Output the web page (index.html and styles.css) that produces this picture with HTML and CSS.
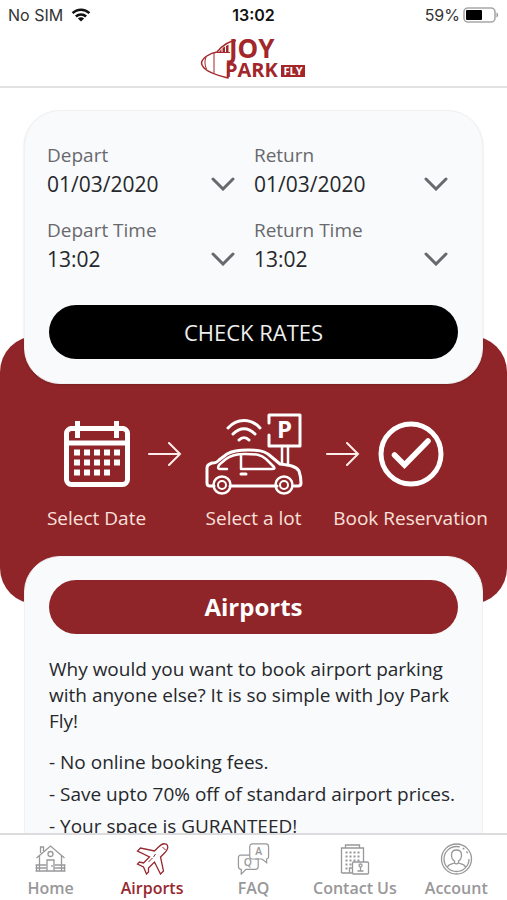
FILE: index.html
```html
<!DOCTYPE html>
<html lang="en">
<head>
<meta charset="utf-8">
<meta name="viewport" content="width=device-width, initial-scale=1">
<title>Joy Park Fly</title>
<link rel="stylesheet" href="styles.css">
</head>
<body>
<div class="status">
  <div class="status-left">
    <span>No SIM</span>
    <svg width="20" height="14" viewBox="0 0 20 14" aria-hidden="true">
      <g fill="none" stroke="#111" stroke-width="2.6">
        <path d="M1.6 5.2C6.2.6 13.800.6 18.400 5.200"/>
        <path d="M4.900 8.500C7.700 5.800 12.300 5.800 15.100 8.500"/>
      </g>
      <path d="M10 13.500L6.900 10.400C8.600 8.900 11.400 8.900 13.100 10.400Z" fill="#111"/>
    </svg>
  </div>
  <span class="status-time">13:02</span>
  <div class="status-right">
    <span>59%</span>
    <svg width="36" height="16" viewBox="0 0 36 16" aria-hidden="true">
      <rect x="1" y="1" width="31" height="14" rx="4" fill="#fff" stroke="#a8a8a8" stroke-width="1.600"/>
      <rect x="3" y="3" width="16" height="10" rx="1" fill="#000"/>
      <path d="M33.500 5.500C35.700 6 35.700 10 33.500 10.500Z" fill="#999"/>
    </svg>
  </div>
</div>

<header class="header">
  <svg class="logo" width="106" height="42" viewBox="0 0 106 42" role="img" aria-label="Joy Park Fly">
    <g fill="none" stroke="#a3262b" stroke-width="1.500" stroke-linejoin="round">
      <path d="M35 2.500C27 3 21 8 16 14C9 15 1 20 .5 25C1 31 10 36 27 40V27"/>
      <path d="M5 19C3.500 23 3.500 27 5.500 31M13 15V35" stroke-width="1"/>
      <path d="M16 14.500H29" stroke-width="1"/>
    </g>
    <path d="M18 14L20.500 11V15ZM21.500 10L24 8.500V15H21.500ZM25 8L27.500 6.500V15H25Z" fill="#a3262b"/>
    <text class="logo-joy" x="28" y="20">JOY</text>
    <text class="logo-park" x="24" y="39">PARK</text>
    <rect x="80" y="27" width="24" height="12" fill="#a3262b"/>
    <text class="logo-fly" x="92" y="37" text-anchor="middle">FLY</text>
  </svg>
</header>

<main class="content">
  <form class="card search">
    <div class="fields">
      <div class="field">
        <label for="depart-date">Depart</label>
        <div class="picker">
          <select id="depart-date"><option>01/03/2020</option></select>
          <svg class="chevron" viewBox="0 0 24 14" aria-hidden="true"><path d="M2 2L12 12L22 2"/></svg>
        </div>
      </div>
      <div class="field">
        <label for="return-date">Return</label>
        <div class="picker">
          <select id="return-date"><option>01/03/2020</option></select>
          <svg class="chevron" viewBox="0 0 24 14" aria-hidden="true"><path d="M2 2L12 12L22 2"/></svg>
        </div>
      </div>
      <div class="field">
        <label for="depart-time">Depart Time</label>
        <div class="picker">
          <select id="depart-time"><option>13:02</option></select>
          <svg class="chevron" viewBox="0 0 24 14" aria-hidden="true"><path d="M2 2L12 12L22 2"/></svg>
        </div>
      </div>
      <div class="field">
        <label for="return-time">Return Time</label>
        <div class="picker">
          <select id="return-time"><option>13:02</option></select>
          <svg class="chevron" viewBox="0 0 24 14" aria-hidden="true"><path d="M2 2L12 12L22 2"/></svg>
        </div>
      </div>
    </div>
    <button type="button" class="rates">CHECK RATES</button>
  </form>

  <section class="band">
    <div class="step">
      <svg width="66" height="66" viewBox="0 0 66 66" aria-hidden="true">
        <rect x="2.500" y="7.500" width="61" height="56" rx="5" fill="none" stroke="#fff" stroke-width="5"/>
        <path d="M2 22H64" stroke="#fff" stroke-width="5"/>
        <path d="M13.500 0V17M52.500 0V17M6 7.500H60" stroke="#fff" stroke-width="5"/>
        <path d="M10 31.500H58M10 41.500H58M10 51.500H48" stroke="#fff" stroke-width="6" stroke-dasharray="6 4"/>
      </svg>
      <span>Select Date</span>
    </div>
    <svg class="arrow" viewBox="0 0 34 24" aria-hidden="true"><path d="M1 12H32M21 1L32 12L21 23"/></svg>
    <div class="step step-wide">
      <svg width="98" height="82" viewBox="0 0 98 82" aria-hidden="true">
        <g fill="none" stroke="#fff" stroke-width="3" stroke-linecap="round" stroke-linejoin="round">
          <path d="M23 15C32 5 46 5 55 15M28 21C35 14 43 14 50 21M34 27C37 24 41 24 44 27"/>
          <path d="M64 10V2H95V33H64V22"/>
          <path d="M77 33V50M83 33V52" stroke-width="2.500"/>
          <path d="M9 73H5C3 73 2 72 2 70V55C2 52 4 51 7 50C10 50 12 50 14 47L22 41C27 38 32 37 43 37C54 37 58 38 63 41L75 51C84 52 91 53 94 58C95 61 96 65 96 70C96 72 95 73 93 73H89M25 73H72"/>
          <path d="M22 56H15C12 56 13 53 15 51L21 46C26 42 31 41 40 41C53 41 56 42 61 46L69 54C70 56 69 56 67 56H36M36 42V56" stroke-width="2.500"/>
          <path d="M36 61H41"/>
          <circle cx="17" cy="72" r="8.500" stroke-width="2.500"/><circle cx="79" cy="72" r="8.500" stroke-width="2.500"/>
          <circle cx="17" cy="72" r="4" stroke-width="2"/><circle cx="79" cy="72" r="4" stroke-width="2"/>
        </g>
        <text class="sign" x="79.500" y="25" text-anchor="middle">P</text>
      </svg>
      <span>Select a lot</span>
    </div>
    <svg class="arrow" viewBox="0 0 34 24" aria-hidden="true"><path d="M1 12H32M21 1L32 12L21 23"/></svg>
    <div class="step">
      <svg width="66" height="66" viewBox="0 0 66 66" aria-hidden="true">
        <g fill="none" stroke="#fff" stroke-width="5" stroke-linecap="round">
          <circle cx="33" cy="33" r="30"/>
          <path d="M16.500 34L26.500 44L50 20" stroke-width="5.500"/>
        </g>
      </svg>
      <span>Book Reservation</span>
    </div>
  </section>

  <section class="card airports">
    <h1>Airports</h1>
    <p>Why would you want to book airport parking with anyone else? It is so simple with Joy Park Fly!</p>
    <ul>
      <li>- No online booking fees.</li>
      <li>- Save upto 70% off of standard airport prices.</li>
      <li>- Your space is GURANTEED!</li>
    </ul>
  </section>
</main>

<nav class="tabs">
  <a href="#home">
    <svg viewBox="0 0 32 32" aria-hidden="true">
      <path d="M2 15L16 3L30 15M5 13V28M27 13V28M1 28H31M6 10V4H9V8M5 22H12M20 22H27M1 22H5M27 22H31M1 25H12M20 25H31M2 22V28M30 22V28"/>
      <circle cx="16" cy="11" r="2.500"/><path d="M12.500 28V17H19.500V28M17.500 22V24"/>
    </svg>
    <span>Home</span>
  </a>
  <a href="#airports" class="active" aria-current="page">
    <svg viewBox="0 0 32 32" aria-hidden="true">
      <path d="M29 1C26 0 24 2 21 5L18 8L4 5L1 8L13 14L7 20L3 19L1 21L7 24L10 31L12 29L12 25L18 19L24 31L27 28L24 14L27 11C30 8 32 5 31 3C31 2 30 1 29 1Z"/>
      <path d="M26 4L29 7M19 11L17 14M16 15L12 19" stroke-width="1"/>
    </svg>
    <span>Airports</span>
  </a>
  <a href="#faq">
    <svg viewBox="0 0 34 34" aria-hidden="true">
      <path d="M13 13V4C13 2 14 1 16 1H30C32 1 33 2 33 4V15C33 17 32 17 31 17V21L26 17H19"/>
      <path d="M13 13H3C2 13 1 14 1 15V25C1 27 2 28 4 28V33L9 28H19C21 28 22 27 22 25V17H15C13 17 13 15 13 13"/>
      <text class="bubble" x="22.500" y="13" text-anchor="middle">A</text>
      <text class="bubble" x="11" y="24" text-anchor="middle">Q</text>
    </svg>
    <span>FAQ</span>
  </a>
  <a href="#contact">
    <svg viewBox="0 0 32 32" aria-hidden="true">
      <path d="M3 30V5H25V19M7 5V2H21V5M3 30H14M11 30V25H14"/>
      <path d="M7 9.500H22M7 13.500H22M7 17.500H22M7 21.500H13M7 25.500H10" stroke-width="2" stroke-dasharray="2 2"/>
      <rect x="14" y="19" width="16" height="12" rx="1"/>
      <circle cx="22" cy="22.500" r="1.500"/><path d="M19 28H25M22 24V28"/>
    </svg>
    <span>Contact Us</span>
  </a>
  <a href="#account">
    <svg viewBox="0 0 32 32" aria-hidden="true">
      <circle cx="16" cy="16" r="15"/><circle cx="16" cy="16" r="12.500" stroke-dasharray="62 3 2 3 2 7"/>
      <path d="M16 7C12.500 7 11 9 11 12C11 15 12 17 14 18V20C11 21 8 21 7 24M16 7C19.500 7 21 9 21 12C21 15 20 17 18 18V20C21 21 24 21 25 24M14 20C15 21 17 21 18 20"/>
    </svg>
    <span>Account</span>
  </a>
</nav>
</body>
</html>
```

FILE: styles.css
```css
* {
  box-sizing: border-box;
}

body {
  margin: 0;
  height: 100vh;
  display: flex;
  flex-direction: column;
  background: #fff;
  color: #26282b;
  font-family: "Open Sans", "Noto Sans", sans-serif;
}

.status {
  display: grid;
  grid-template-columns: 1fr auto 1fr;
  align-items: center;
  height: 30px;
  padding: 0 8px;
  color: #333;
  font: 16px/20px Inter, "Liberation Sans", sans-serif;
}

.status-left,
.status-right {
  display: flex;
  align-items: center;
  gap: 8px;
}

.status-right {
  justify-content: flex-end;
  gap: 3px;
}

.status-time {
  color: #111;
  font-weight: 600;
}

.header {
  display: flex;
  justify-content: center;
  padding: 8px 0 6px;
  border-bottom: 2px solid #e2e2e4;
}

.logo {
  overflow: visible;
}

.logo text {
  fill: #a3262b;
  font-weight: 700;
}

.logo .logo-joy {
  font-size: 26px;
}

.logo .logo-park {
  font-size: 20px;
}

.logo .logo-fly {
  fill: #fff;
  font-size: 11px;
}

.content {
  flex: 1;
  min-height: 0;
  padding-top: 22px;
  overflow: hidden auto;
  scrollbar-width: none;
}

.card {
  position: relative;
  margin: 0 24px;
  padding: 24px;
  border: 1px solid #eff1f3;
  border-radius: 36px;
  background: #f9fafc;
}

.search {
  padding-top: 32px;
  box-shadow: 0 1px 2px rgba(0, 0, 0, 0.15);
}

.fields {
  display: grid;
  grid-template-columns: 31fr 32fr;
  gap: 17px 19px;
  padding: 0 10px 0 0;
  margin-left: -2px;
}

.field label {
  display: block;
  color: #68696c;
  font-size: 19px;
  line-height: 24px;
}

.picker {
  display: grid;
  align-items: center;
}

.picker > * {
  grid-area: 1 / 1;
}

.picker select {
  width: 100%;
  height: 34px;
  padding: 0;
  border: 0;
  background: transparent;
  color: #26282b;
  font: 21px/34px "Open Sans", "Noto Sans", sans-serif;
  appearance: none;
}

.chevron {
  justify-self: end;
  width: 24px;
  height: 14px;
  fill: none;
  stroke: #68696c;
  stroke-width: 3;
  stroke-linecap: round;
  pointer-events: none;
}

.rates,
.airports h1 {
  display: block;
  width: 100%;
  margin: 0;
  padding: 0;
  border: 0;
  border-radius: 27px;
  color: #fff;
  line-height: 54px;
  text-align: center;
}

.rates {
  margin-top: 29px;
  background: #000;
  color: #eee;
  font-family: inherit;
  font-size: 22px;
}

.band {
  display: flex;
  justify-content: center;
  gap: 18px;
  margin-top: -48px;
  padding: 77px 0 72px;
  border-radius: 36px;
  background: #8f2528;
}

.step {
  display: flex;
  flex-direction: column;
  align-items: center;
  justify-content: flex-end;
  gap: 17px;
  width: 66px;
  color: #fbe0dc;
  font-size: 19px;
  line-height: 28px;
  white-space: nowrap;
}

.step > svg {
  flex: none;
}

.step-wide {
  width: 108px;
  gap: 9px;
}

.sign {
  fill: #fff;
  font-size: 24px;
  font-weight: 700;
}

.arrow {
  width: 34px;
  height: 24px;
  margin-top: 29px;
  fill: none;
  stroke: #fbecea;
  stroke-width: 2;
  stroke-linecap: round;
}

.airports {
  margin-top: -48px;
  padding-top: 23px;
}

.airports h1 {
  background: #8f2528;
  font-size: 24px;
}

.airports p {
  margin: 22px 0 12px;
  font-size: 19px;
  line-height: 26px;
}

.airports ul {
  margin: 0;
  padding: 0;
  font-size: 19px;
  line-height: 32px;
  list-style: none;
}

.tabs {
  display: grid;
  grid-template-columns: repeat(5, 1fr);
  height: 67px;
  padding-top: 8px;
  border-top: 2px solid #dcdcde;
  background: #fff;
}

.tabs a {
  display: flex;
  flex-direction: column;
  align-items: center;
  gap: 2px;
  color: #98989a;
  font-size: 16px;
  font-weight: 600;
  line-height: 22px;
  text-decoration: none;
  white-space: nowrap;
}

.tabs .active {
  color: #96282f;
}

.tabs svg {
  width: 33px;
  height: 32px;
  fill: none;
  stroke: currentColor;
  stroke-width: 1.3;
}

.tabs .bubble {
  fill: currentColor;
  stroke: none;
  font-size: 11px;
}
```
